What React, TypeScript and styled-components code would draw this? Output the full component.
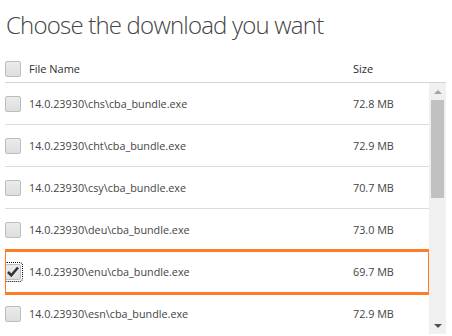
import styled, { createGlobalStyle } from "styled-components";

const GlobalStyle = createGlobalStyle`
  html, body {
    margin: 0;
    padding: 0;
    background: #ffffff;
  }
  body {
    font-family: "Open Sans", "Noto Sans", "DejaVu Sans", sans-serif;
    color: #444444;
  }
`;

const Page = styled.div`
  width: 441px;
  padding: 8px 0 0 5px;
`;

const Title = styled.h1`
  margin: 0 0 13px 1px;
  height: 34px;
  font-size: 24px;
  font-weight: 300;
  line-height: 34px;
  letter-spacing: -0.8px;
  color: #444444;
  white-space: nowrap;
`;

const HeaderRow = styled.div`
  display: flex;
  align-items: center;
  height: 27px;
  border-bottom: 1px solid #d4d4d4;
  font-size: 11px;
  font-weight: 500;
  color: #2e2e2e;
`;

const ListArea = styled.div`
  display: flex;
  height: 251px;
`;

const Rows = styled.div`
  width: 424px;
  overflow: hidden;
  display: flex;
  flex-direction: column;
`;

const Row = styled.div<{ $selected?: boolean }>`
  position: relative;
  flex: none;
  display: flex;
  align-items: center;
  height: 41px;
  border-bottom: 1px solid #dcdcdc;
  font-size: 10.8px;
  color: #444444;
  outline: ${(p) => (p.$selected ? "3px solid #fd7e26" : "none")};
  outline-offset: -1px;
  z-index: ${(p) => (p.$selected ? 1 : 0)};
`;

const Box = styled.span<{ $checked?: boolean }>`
  flex: none;
  display: flex;
  align-items: center;
  justify-content: center;
  width: 14px;
  height: 14px;
  border: 1px solid #bdbdbd;
  border-radius: 2px;
  background: linear-gradient(#ebebeb, #dedede);
  outline: ${(p) => (p.$checked ? "1px dotted #000000" : "none")};
  outline-offset: 1px;
`;

const Name = styled.span`
  flex: 1;
  padding-left: 8px;
  white-space: nowrap;
`;

const Size = styled.span<{ $wide?: boolean }>`
  flex: none;
  width: ${(p) => (p.$wide ? "93px" : "76px")};
  white-space: nowrap;
`;

const Scrollbar = styled.div`
  flex: none;
  width: 17px;
  display: flex;
  flex-direction: column;
  align-items: center;
  background: #f0f0f0;
`;

const Arrow = styled.div<{ $down?: boolean; $enabled?: boolean }>`
  flex: none;
  height: 17px;
  display: flex;
  align-items: center;
  justify-content: center;
  &::before {
    content: "";
    border-left: 4px solid transparent;
    border-right: 4px solid transparent;
    ${(p) =>
      p.$down
        ? `border-top: 4px solid ${p.$enabled ? "#505050" : "#a3a3a3"};`
        : `border-bottom: 4px solid ${p.$enabled ? "#505050" : "#a3a3a3"};`}
  }
`;

const Thumb = styled.div`
  flex: none;
  width: 13px;
  height: 98px;
  background: #c1c1c1;
`;

const Track = styled.div`
  flex: 1;
`;

const CheckMark = () => (
  <svg width="12" height="11" viewBox="0 0 12 11">
    <path d="M1 6 L4.3 9.3 L11 1.5" fill="none" stroke="#333333" strokeWidth="2.6" />
  </svg>
);

const files = [
  { name: "14.0.23930\\chs\\cba_bundle.exe", size: "72.8 MB" },
  { name: "14.0.23930\\cht\\cba_bundle.exe", size: "72.9 MB" },
  { name: "14.0.23930\\csy\\cba_bundle.exe", size: "70.7 MB" },
  { name: "14.0.23930\\deu\\cba_bundle.exe", size: "73.0 MB" },
  { name: "14.0.23930\\enu\\cba_bundle.exe", size: "69.7 MB", checked: true },
  { name: "14.0.23930\\esn\\cba_bundle.exe", size: "72.9 MB" },
];

export default function App() {
  return (
    <>
      <GlobalStyle />
      <Page>
        <Title>Choose the download you want</Title>
        <HeaderRow>
          <Box />
          <Name>File Name</Name>
          <Size $wide>Size</Size>
        </HeaderRow>
        <ListArea>
          <Rows>
            {files.map((f) => (
              <Row key={f.name} $selected={f.checked}>
                <Box $checked={f.checked}>{f.checked && <CheckMark />}</Box>
                <Name>{f.name}</Name>
                <Size>{f.size}</Size>
              </Row>
            ))}
          </Rows>
          <Scrollbar>
            <Arrow />
            <Thumb />
            <Track />
            <Arrow $down $enabled />
          </Scrollbar>
        </ListArea>
      </Page>
    </>
  );
}
